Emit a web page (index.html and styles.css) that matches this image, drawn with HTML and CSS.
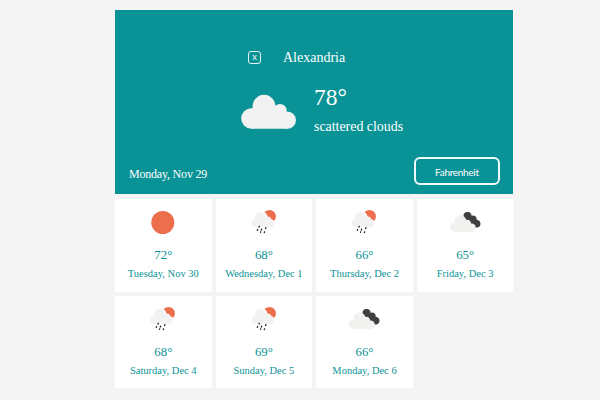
FILE: index.html
```
<!DOCTYPE html>
<html lang="en">
<head>
<meta charset="utf-8">
<title>Weather</title>
<link rel="stylesheet" href="styles.css">
</head>
<body>
<svg class="defs" width="0" height="0">
  <symbol id="sun" viewBox="0 0 40 30"><circle cx="19.8" cy="15.5" r="11.5" fill="#ec6e4c"/></symbol>
  <symbol id="rain" viewBox="0 0 40 30">
    <circle cx="25.5" cy="9.4" r="6.4" fill="#ec6e4c"/>
    <g fill="#fff"><circle cx="17.3" cy="10.4" r="6.2"/><circle cx="23.4" cy="13.4" r="4"/><circle cx="26.4" cy="16.4" r="4.1"/></g>
    <g fill="#f2f2f2"><circle cx="16.5" cy="10.4" r="5.6"/><circle cx="11.8" cy="16" r="4.1"/><circle cx="23" cy="13.6" r="3.6"/><circle cx="26" cy="16.5" r="3.8"/><path d="M11.8 20.1V12h11l3.2 3v5.3z"/></g>
    <path d="M15.3 19.3l-.3.8M13.6 22.5l-.3.9M17.6 22.2l-.3.9M21.9 20.7l-.3.8M16.7 24.8l-.2.5M20.6 24.8l-.3.8" stroke="#222" stroke-width="1.3" stroke-linecap="round"/>
  </symbol>
  <symbol id="clouds" viewBox="0 0 40 30">
    <path d="M18.5 9.2a4 4 0 0 1 8.1-.4 3.7 3.7 0 0 1 5.1 4 3.9 3.9 0 1 1-2.3 7.1 4 4 0 0 1-4-3.7 4.2 4.2 0 0 1-3.6-3.3A4 4 0 0 1 18.5 9.2z" fill="#3f3f3f"/>
    <path d="M9.4 24.9a4.6 4.6 0 0 1 .1-9.2A6.1 6.1 0 0 1 21.4 13a3.6 3.6 0 0 1 4.7 3.4 4.3 4.3 0 0 1 1.2 8.5z" fill="#f1f1f0"/>
  </symbol>
</svg>
<main class="weather">
  <section class="today">
    <header class="city">
      <span class="close">x</span>
      <h1 class="name">Alexandria</h1>
    </header>
    <div class="now">
      <svg class="cloud" width="56" height="36" viewBox="0 0 56 36" fill="#f2f2f2"><circle cx="24" cy="12.2" r="11.4"/><circle cx="11.5" cy="24.5" r="10.3"/><circle cx="40" cy="16.6" r="6.7"/><circle cx="47.3" cy="26.2" r="8.6"/><path d="M11.5 34.8V14.2L34 12l12 5.6 1.3 17.2z"/></svg>
      <div class="reading">
        <div class="degrees">78°</div>
        <div class="sky">scattered clouds</div>
      </div>
    </div>
    <footer class="bottom">
      <span class="date">Monday, Nov 29</span>
      <button class="unit">Fahrenheit</button>
    </footer>
  </section>
  <section class="forecast">
    <article class="day"><svg class="icon"><use href="#sun"/></svg><div class="temp">72°</div><div class="label">Tuesday, Nov 30</div></article>
    <article class="day"><svg class="icon"><use href="#rain"/></svg><div class="temp">68°</div><div class="label">Wednesday, Dec 1</div></article>
    <article class="day"><svg class="icon"><use href="#rain"/></svg><div class="temp">66°</div><div class="label">Thursday, Dec 2</div></article>
    <article class="day"><svg class="icon"><use href="#clouds"/></svg><div class="temp">65°</div><div class="label">Friday, Dec 3</div></article>
    <article class="day"><svg class="icon"><use href="#rain"/></svg><div class="temp">68°</div><div class="label">Saturday, Dec 4</div></article>
    <article class="day"><svg class="icon"><use href="#rain"/></svg><div class="temp">69°</div><div class="label">Sunday, Dec 5</div></article>
    <article class="day"><svg class="icon"><use href="#clouds"/></svg><div class="temp">66°</div><div class="label">Monday, Dec 6</div></article>
  </section>
</main>
</body>
</html>
```
FILE: styles.css
```
* { box-sizing: border-box; }
body {
  margin: 0;
  background: #f4f4f4;
  font-family: "Liberation Serif", "Times New Roman", serif;
}
.defs { display: block; }
.weather { width: 398.4px; margin: 10px 0 0 115px; }
.today {
  display: flex;
  flex-direction: column;
  height: 184.3px;
  padding: 37px 13.5px 9px 14px;
  background: #0a9396;
  color: #fff;
}
.city {
  display: flex;
  align-items: center;
  height: 20px;
  margin-left: 119px;
  gap: 22px;
}
.close {
  width: 13px;
  height: 13px;
  border: 1.5px solid #e4f6f6;
  border-radius: 3px;
  font: 9px/10px "Open Sans", sans-serif;
  text-align: center;
}
.name { margin: 0; padding-top: 1px; font-size: 14px; font-weight: 400; line-height: 20px; }
.now { display: flex; gap: 18px; margin: 17px 0 0 111px; }
.cloud { margin-top: 10px; overflow: visible; }
.degrees { font-size: 23.5px; line-height: 26px; }
.sky { margin-top: 9px; font-size: 13.9px; line-height: 16px; }
.bottom {
  display: flex;
  justify-content: space-between;
  align-items: flex-end;
  margin-top: auto;
}
.date { font-size: 12px; line-height: 14px; margin-bottom: 4px; letter-spacing: -0.2px; }
.unit {
  width: 86px;
  height: 28px;
  padding: 1px 0 0;
  border: 2px solid #f0fafa;
  border-radius: 6px;
  background: none;
  color: #fff;
  font: 10px/22px Lato, sans-serif;
  letter-spacing: -0.3px;
}
.forecast {
  display: grid;
  grid-template-columns: repeat(4, 1fr);
  gap: 4px;
  margin-top: 4.7px;
}
.day {
  height: 92.7px;
  padding-top: 8px;
  background: #fff;
  color: #0a9396;
  text-align: center;
}
.icon { display: block; width: 40px; height: 30px; margin: 0 auto; }
.temp { margin-top: 10px; font-size: 12.8px; line-height: 16px; }
.label { margin-top: 3px; font-size: 10.5px; line-height: 15px; white-space: nowrap; }
```
